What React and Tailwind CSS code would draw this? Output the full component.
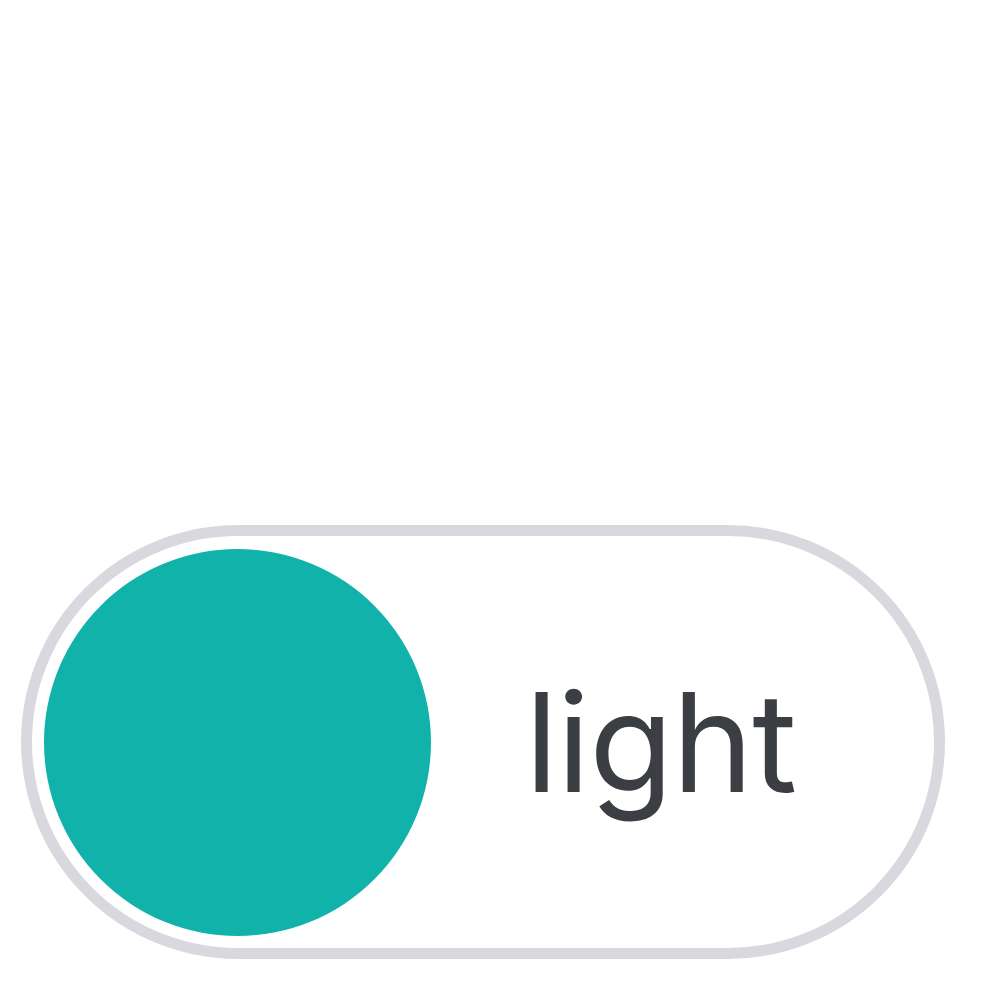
import React, { useState } from "react";

// Theme switch: big pill with a teal knob and the current mode label
const ThemeToggle = () => {
  const [mode, setMode] = useState("light");
  return (
    <button
      type="button"
      onClick={() => setMode((m) => (m === "light" ? "dark" : "light"))}
      className="w-[924px] h-[434px] rounded-full border-[11px] border-[#d8d9de] bg-white p-[12px] flex items-center cursor-pointer"
    >
      <span className="w-[387px] h-[387px] rounded-full bg-[#10b2aa] shrink-0" />
      <span
        className="flex-1 text-center pr-[32px] text-[137px] leading-none tracking-[-1px] text-[#3b3e43]"
        style={{ fontFamily: "Inter, 'Liberation Sans', sans-serif" }}
      >
        {mode}
      </span>
    </button>
  );
};

export default function App() {
  return (
    <div className="w-[1000px] h-[1000px] bg-white pt-[525px] pl-[21px]">
      <ThemeToggle />
    </div>
  );
}
